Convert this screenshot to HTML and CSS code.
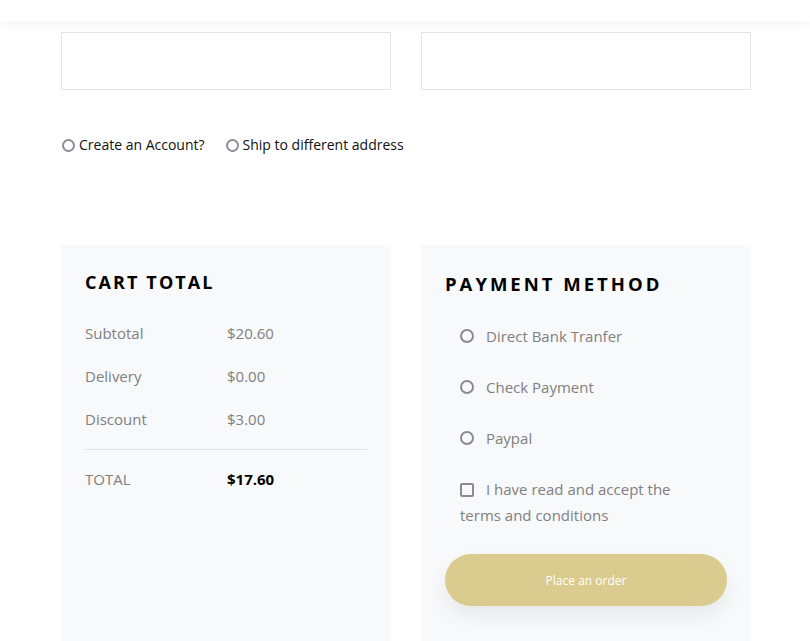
FILE: index.html
```html
<!DOCTYPE html>
<html lang="en">
<head>
<meta charset="utf-8">
<title>Checkout</title>
<link rel="stylesheet" href="styles.css">
</head>
<body>
<header class="topbar"><span class="brand-tail">p</span></header>
<main class="container">
  <div class="inputs">
    <div class="field"></div>
    <div class="field"></div>
  </div>
  <div class="options">
    <label class="opt"><span class="radio-sm"></span>Create an Account?</label>
    <label class="opt"><span class="radio-sm"></span>Ship to different address</label>
  </div>
  <div class="boxes">
    <section class="box">
      <h3 class="box-title">Cart Total</h3>
      <div class="row first"><span class="lbl">Subtotal</span><span class="val">$20.60</span></div>
      <div class="row"><span class="lbl">Delivery</span><span class="val">$0.00</span></div>
      <div class="row"><span class="lbl">Discount</span><span class="val">$3.00</span></div>
      <hr class="divider">
      <div class="row total"><span class="lbl">TOTAL</span><span class="val">$17.60</span></div>
    </section>
    <section class="box">
      <h3 class="box-title pay-title">Payment Method</h3>
      <div class="pay-list">
        <label class="pay-opt"><span class="radio"></span>Direct Bank Tranfer</label>
        <label class="pay-opt"><span class="radio"></span>Check Payment</label>
        <label class="pay-opt"><span class="radio"></span>Paypal</label>
        <label class="pay-opt terms"><span class="check"></span>I have read and accept the terms and conditions</label>
      </div>
      <button class="order-btn">Place an order</button>
    </section>
  </div>
</main>
</body>
</html>
```
FILE: styles.css
```css
* { box-sizing: border-box; }
body {
  margin: 0;
  font-family: "Open Sans", "Noto Sans", sans-serif;
  background: #fff;
  color: #000;
  overflow: hidden;
}
.topbar {
  position: relative;
  height: 22px;
  background: #fff;
  box-shadow: 0 2px 8px rgba(0,0,0,0.06);
  z-index: 2;
  overflow: hidden;
}
.brand-tail {
  position: absolute;
  left: 125px;
  top: -33px;
  font-size: 28px;
  font-weight: 700;
  line-height: 28px;
  color: #000;
}
.container {
  width: 690px;
  margin-left: 61px;
  padding-top: 10px;
}
.inputs {
  display: grid;
  grid-template-columns: 330px 330px;
  gap: 30px;
}
.field {
  height: 58px;
  border: 1px solid #e4e4e4;
  background: #fff;
}
.options {
  display: flex;
  gap: 20px;
  margin-top: 44px;
  font-size: 14px;
  line-height: 22px;
  color: #111;
}
.opt {
  display: flex;
  align-items: center;
}
.radio-sm {
  width: 13px;
  height: 13px;
  border: 2px solid #8d8d97;
  border-radius: 50%;
  margin-right: 4px;
  margin-left: 1px;
}
.boxes {
  display: grid;
  grid-template-columns: 330px 330px;
  gap: 30px;
  margin-top: 89px;
}
.box {
  background: #f8f9fb;
  padding: 24px 24px 40px;
  height: 420px;
}
.box-title {
  margin: 0;
  font-size: 18px;
  line-height: 27px;
  font-weight: 700;
  letter-spacing: 2.1px;
  text-transform: uppercase;
  color: #000;
}
.pay-title { margin-top: 1px; font-size: 18.5px; letter-spacing: 3px; }
.row {
  display: flex;
  font-size: 15px;
  line-height: 24px;
  color: #808080;
  margin-top: 19px;
}
.row.first { margin-top: 25px; }
.lbl { width: 142px; }
.divider {
  border: 0;
  border-top: 1px solid #e2e2e2;
  margin: 18px 0 0;
}
.row.total { margin-top: 17px; }
.row.total .val { color: #000; font-weight: 700; }
.pay-list {
  margin-top: 26px;
  display: flex;
  flex-direction: column;
  gap: 25px;
  padding-left: 15px;
  font-size: 15px;
  line-height: 26px;
  color: #808080;
}
.pay-opt {
  display: flex;
  align-items: center;
}
.radio {
  width: 14px;
  height: 14px;
  border: 2px solid #8a8a96;
  border-radius: 50%;
  margin-right: 12px;
  flex: none;
}
.terms {
  display: block;
  width: 230px;
}
.check {
  display: inline-block;
  width: 14px;
  height: 14px;
  border: 2px solid #8a8a96;
  border-radius: 2px;
  margin-right: 12px;
  vertical-align: -2px;
}
.order-btn {
  display: block;
  margin-top: 26px;
  width: 282px;
  height: 52px;
  border: 0;
  border-radius: 26px;
  background: #dacc8e;
  color: #fff;
  font-family: "Open Sans", sans-serif;
  font-size: 12px;
  box-shadow: 0 10px 20px rgba(0,0,0,0.07);
}
```
